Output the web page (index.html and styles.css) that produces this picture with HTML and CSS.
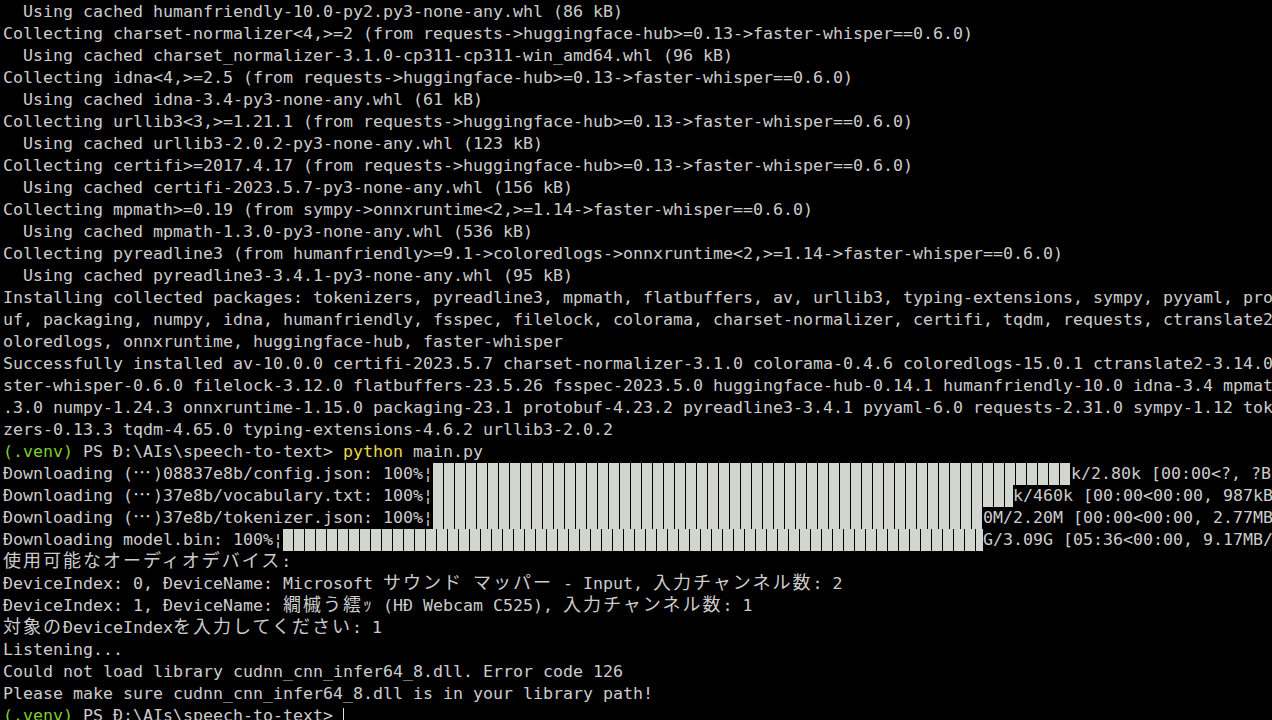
FILE: index.html
```html
<!DOCTYPE html>
<html lang="ja">
<head>
    <meta charset="UTF-8">
    <meta name="viewport" content="width=device-width, initial-scale=1.0">
    <title>Windows PowerShell</title>
    <link rel="stylesheet" href="styles.css">
</head>
<body>
    <div class="term">
        <div class="ln">  Using cached humanfriendly-10.0-py2.py3-none-any.whl (86 kB)</div>
        <div class="ln">Collecting charset-normalizer&lt;4,&gt;=2 (from requests-&gt;huggingface-hub&gt;=0.13-&gt;faster-whisper==0.6.0)</div>
        <div class="ln">  Using cached charset_normalizer-3.1.0-cp311-cp311-win_amd64.whl (96 kB)</div>
        <div class="ln">Collecting idna&lt;4,&gt;=2.5 (from requests-&gt;huggingface-hub&gt;=0.13-&gt;faster-whisper==0.6.0)</div>
        <div class="ln">  Using cached idna-3.4-py3-none-any.whl (61 kB)</div>
        <div class="ln">Collecting urllib3&lt;3,&gt;=1.21.1 (from requests-&gt;huggingface-hub&gt;=0.13-&gt;faster-whisper==0.6.0)</div>
        <div class="ln">  Using cached urllib3-2.0.2-py3-none-any.whl (123 kB)</div>
        <div class="ln">Collecting certifi&gt;=2017.4.17 (from requests-&gt;huggingface-hub&gt;=0.13-&gt;faster-whisper==0.6.0)</div>
        <div class="ln">  Using cached certifi-2023.5.7-py3-none-any.whl (156 kB)</div>
        <div class="ln">Collecting mpmath&gt;=0.19 (from sympy-&gt;onnxruntime&lt;2,&gt;=1.14-&gt;faster-whisper==0.6.0)</div>
        <div class="ln">  Using cached mpmath-1.3.0-py3-none-any.whl (536 kB)</div>
        <div class="ln">Collecting pyreadline3 (from humanfriendly&gt;=9.1-&gt;coloredlogs-&gt;onnxruntime&lt;2,&gt;=1.14-&gt;faster-whisper==0.6.0)</div>
        <div class="ln">  Using cached pyreadline3-3.4.1-py3-none-any.whl (95 kB)</div>
        <div class="ln">Installing collected packages: tokenizers, pyreadline3, mpmath, flatbuffers, av, urllib3, typing-extensions, sympy, pyyaml, protob</div>
        <div class="ln">uf, packaging, numpy, idna, humanfriendly, fsspec, filelock, colorama, charset-normalizer, certifi, tqdm, requests, ctranslate2, c</div>
        <div class="ln">oloredlogs, onnxruntime, huggingface-hub, faster-whisper</div>
        <div class="ln">Successfully installed av-10.0.0 certifi-2023.5.7 charset-normalizer-3.1.0 colorama-0.4.6 coloredlogs-15.0.1 ctranslate2-3.14.0 fa</div>
        <div class="ln">ster-whisper-0.6.0 filelock-3.12.0 flatbuffers-23.5.26 fsspec-2023.5.0 huggingface-hub-0.14.1 humanfriendly-10.0 idna-3.4 mpmath-1</div>
        <div class="ln">.3.0 numpy-1.24.3 onnxruntime-1.15.0 packaging-23.1 protobuf-4.23.2 pyreadline3-3.4.1 pyyaml-6.0 requests-2.31.0 sympy-1.12 tokeni</div>
        <div class="ln">zers-0.13.3 tqdm-4.65.0 typing-extensions-4.6.2 urllib3-2.0.2</div>
        <div class="ln"><span class="venv">(.venv)</span> PS Đ:\AIs\speech-to-text&gt; <span class="cmd">python</span> main.py</div>
        <!-- tqdm bars overdraw the counters, so the bar width is per line -->
        <div class="ln">Đownloading (<span class="w">…</span>)08837e8b/config.json: 100%¦<span class="bar" style="width: 638px"></span>k/2.80k [00:00&lt;?, ?B/s]</div>
        <div class="ln">Đownloading (<span class="w">…</span>)37e8b/vocabulary.txt: 100%¦<span class="bar" style="width: 580px"></span>k/460k [00:00&lt;00:00, 987kB/s]</div>
        <div class="ln">Đownloading (<span class="w">…</span>)37e8b/tokenizer.json: 100%¦<span class="bar" style="width: 550px"></span>0M/2.20M [00:00&lt;00:00, 2.77MB/s]</div>
        <div class="ln">Đownloading model.bin: 100%¦<span class="bar" style="width: 700px"></span>G/3.09G [05:36&lt;00:00, 9.17MB/s]</div>
        <div class="ln"><span class="w">使用可能なオーディオデバイス</span>:</div>
        <div class="ln">ĐeviceIndex: 0, ĐeviceName: Microsoft <span class="w">サウンド</span> <span class="w">マッパー</span> - Input, <span class="w">入力チャンネル数</span>: 2</div>
        <div class="ln">ĐeviceIndex: 1, ĐeviceName: <span class="w">繝槭う繧</span><span class="hw">ｯ</span> (HĐ Webcam C525), <span class="w">入力チャンネル数</span>: 1</div>
        <div class="ln"><span class="w">対象の</span>ĐeviceIndex<span class="w">を入力してください</span>: 1</div>
        <div class="ln">Listening...</div>
        <div class="ln">Could not load library cudnn_cnn_infer64_8.dll. Error code 126</div>
        <div class="ln">Please make sure cudnn_cnn_infer64_8.dll is in your library path!</div>
        <div class="ln"><span class="venv">(.venv)</span> PS Đ:\AIs\speech-to-text&gt; <span class="cursor"></span></div>
    </div>
</body>
</html>
```

FILE: styles.css
```css
html, body {
    margin: 0;
    height: 100%;
    overflow: hidden;
}
body {
    background-color: #000;
    color: #cccccc;
    font-family: "DejaVu Sans Mono", "Noto Sans CJK JP", monospace;
    font-size: 16.61px;
}
.term {
    padding: 1px 0 0 3px;
}
.ln {
    height: 22px;
    line-height: 22px;
    white-space: pre;
    overflow: visible;
}
.venv {
    color: #7ccf30;
}
.cmd {
    color: #e8d84c;
}
/* double width cells, kept inside the strut so the line doesn't move */
.w {
    font-family: "Noto Sans CJK JP", sans-serif;
    font-size: 18px;
    line-height: 16px;
    letter-spacing: 2px;
}
.hw {
    font-family: "Noto Sans CJK JP", sans-serif;
    font-size: 18px;
    line-height: 16px;
    letter-spacing: 1px;
}
.bar {
    display: inline-block;
    height: 22px;
    vertical-align: top;
    background: repeating-linear-gradient(to right, #d3d6cf 0 10px, #000 10px 11px);
}
.cursor {
    display: inline-block;
    width: 1px;
    height: 16px;
    background-color: #e0e0e0;
    vertical-align: -3px;
}
```
